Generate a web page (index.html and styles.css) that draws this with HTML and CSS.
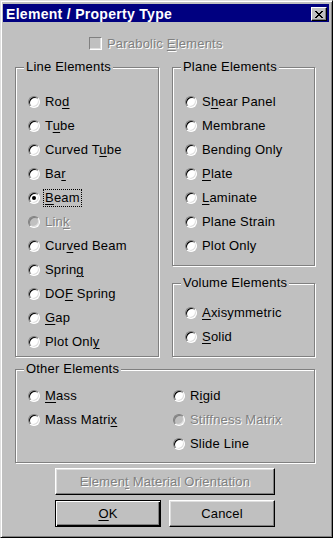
FILE: index.html
```html
<!DOCTYPE html>
<html>
<head>
    <title>Element / Property Type</title>
    <meta name="viewport" content="width=device-width, initial-scale=1.0">
    <link rel="stylesheet" href="styles.css">
</head>
<body>
    <div class="window">
        <div class="titlebar">
            <span class="title">Element / Property Type</span>
            <span class="close">
                <svg width="8" height="7" viewBox="0 0 8 7" shape-rendering="crispEdges">
                    <path fill="#000" d="M0 0h2v1h-2z M6 0h2v1h-2z M1 1h2v1h-2z M5 1h2v1h-2z M2 2h4v1h-4z M3 3h2v1h-2z M2 4h4v1h-4z M1 5h2v1h-2z M5 5h2v1h-2z M0 6h2v1h-2z M6 6h2v1h-2z"/>
                </svg>
            </span>
        </div>

        <div class="content">
            <div class="check-row disabled">
                <span class="checkbox"></span>
                <span class="label">Parabolic <u>E</u>lements</span>
            </div>

            <div class="upper">
                <div class="group line-group">
                    <div class="group-title">Line Elements</div>
                    <div class="radio-list">
                        <div class="radio-row"><span class="radio"></span><span class="label">Ro<u>d</u></span></div>
                        <div class="radio-row"><span class="radio"></span><span class="label">T<u>u</u>be</span></div>
                        <div class="radio-row"><span class="radio"></span><span class="label">Curved T<u>u</u>be</span></div>
                        <div class="radio-row"><span class="radio"></span><span class="label">Ba<u>r</u></span></div>
                        <div class="radio-row"><span class="radio checked"></span><span class="label focus"><u>B</u>eam</span></div>
                        <div class="radio-row disabled"><span class="radio"></span><span class="label">Lin<u>k</u></span></div>
                        <div class="radio-row"><span class="radio"></span><span class="label">Cur<u>v</u>ed Beam</span></div>
                        <div class="radio-row"><span class="radio"></span><span class="label">Sprin<u>g</u></span></div>
                        <div class="radio-row"><span class="radio"></span><span class="label">DO<u>F</u> Spring</span></div>
                        <div class="radio-row"><span class="radio"></span><span class="label"><u>G</u>ap</span></div>
                        <div class="radio-row"><span class="radio"></span><span class="label">Plot Onl<u>y</u></span></div>
                    </div>
                </div>

                <div class="right-col">
                    <div class="group plane-group">
                        <div class="group-title">Plane Elements</div>
                        <div class="radio-list">
                            <div class="radio-row"><span class="radio"></span><span class="label">S<u>h</u>ear Panel</span></div>
                            <div class="radio-row"><span class="radio"></span><span class="label">Membrane</span></div>
                            <div class="radio-row"><span class="radio"></span><span class="label">Bending Only</span></div>
                            <div class="radio-row"><span class="radio"></span><span class="label"><u>P</u>late</span></div>
                            <div class="radio-row"><span class="radio"></span><span class="label"><u>L</u>aminate</span></div>
                            <div class="radio-row"><span class="radio"></span><span class="label">Plane Strain</span></div>
                            <div class="radio-row"><span class="radio"></span><span class="label">Plot Only</span></div>
                        </div>
                    </div>

                    <div class="group volume-group">
                        <div class="group-title">Volume Elements</div>
                        <div class="radio-list">
                            <div class="radio-row"><span class="radio"></span><span class="label"><u>A</u>xisymmetric</span></div>
                            <div class="radio-row"><span class="radio"></span><span class="label"><u>S</u>olid</span></div>
                        </div>
                    </div>
                </div>
            </div>

            <div class="group other-group">
                <div class="group-title">Other Elements</div>
                <div class="other-cols">
                    <div class="radio-list">
                        <div class="radio-row"><span class="radio"></span><span class="label"><u>M</u>ass</span></div>
                        <div class="radio-row"><span class="radio"></span><span class="label">Mass Matri<u>x</u></span></div>
                    </div>
                    <div class="radio-list">
                        <div class="radio-row"><span class="radio"></span><span class="label">R<u>i</u>gid</span></div>
                        <div class="radio-row disabled"><span class="radio"></span><span class="label">Stiffness Matrix</span></div>
                        <div class="radio-row"><span class="radio"></span><span class="label">Slide Line</span></div>
                    </div>
                </div>
            </div>

            <div class="buttons">
                <div class="btn wide disabled">Elemen<u>t</u> Material Orientation</div>
                <div class="btn default"><u>O</u>K</div>
                <div class="btn">Cancel</div>
            </div>
        </div>
    </div>
</body>
</html>
```

FILE: styles.css
```css
body {
    margin: 0;
    background-color: #ffffff;
    font-family: "Liberation Sans", Arial, sans-serif;
    font-size: 13px;
    letter-spacing: 0.2px;
    color: #000000;
}

u {
    text-decoration-thickness: 1px;
    text-underline-offset: 2px;
}

.window {
    box-sizing: border-box;
    width: 333px;
    height: 538px;
    padding: 3px 3px 2px 2px;
    background-color: #c0c0c0;
    border: 1px solid;
    border-color: #dfdfdf #000000 #000000 #dfdfdf;
    box-shadow: inset 1px 1px 0 #ffffff, inset -1px -1px 0 #808080;
}

/* title bar */
.titlebar {
    display: flex;
    align-items: flex-start;
    height: 18px;
    background-color: #000080;
}

.title {
    padding: 2px 0 0 3px;
    line-height: 16px;
    font-size: 14px;
    font-weight: bold;
    letter-spacing: 0.3px;
    color: #ffffff;
}

.close {
    display: flex;
    align-items: center;
    justify-content: center;
    box-sizing: border-box;
    width: 16px;
    height: 14px;
    margin: 3px 2px 0 auto;
    background-color: #c0c0c0;
    border: 1px solid;
    border-color: #ffffff #000000 #000000 #ffffff;
    box-shadow: inset -1px -1px 0 #808080;
}

.content {
    padding-left: 12px;
}

/* parabolic checkbox */
.check-row {
    display: flex;
    align-items: center;
    height: 16px;
    margin: 13px 0 0 74px;
}

.checkbox {
    box-sizing: border-box;
    width: 13px;
    height: 13px;
    margin-right: 5px;
    border: 1px solid;
    border-color: #808080 #ffffff #ffffff #808080;
    box-shadow: inset -1px -1px 0 #dfdfdf;
}

.disabled .label,
.btn.disabled {
    color: #808080;
    text-shadow: 1px 1px 0 #ffffff;
}

/* group boxes */
.group {
    box-sizing: border-box;
    border: 1px solid #808080;
    box-shadow: 1px 1px 0 #ffffff, inset 1px 1px 0 #ffffff;
}

.group-title {
    width: fit-content;
    margin: -8px 0 0 8px;
    padding: 0 2px;
    line-height: 14px;
    background-color: #c0c0c0;
}

.upper {
    display: grid;
    grid-template-columns: 144px 143px;
    column-gap: 13px;
    margin-top: 16px;
}

.line-group {
    height: 290px;
}

.right-col {
    display: flex;
    flex-direction: column;
}

.plane-group {
    height: 199px;
}

.volume-group {
    height: 74px;
    margin-top: 17px;
}

.other-group {
    width: 300px;
    height: 94px;
    margin-top: 12px;
}

.radio-list {
    padding-left: 12px;
}

.line-group .radio-list,
.plane-group .radio-list {
    margin-top: 16px;
}

.volume-group .radio-list {
    margin-top: 11px;
}

.other-cols {
    display: grid;
    grid-template-columns: 157px auto;
    margin-top: 8px;
}

.other-cols .radio-list + .radio-list {
    padding-left: 0;
}

/* radio buttons */
.radio-row {
    display: flex;
    align-items: center;
    height: 24px;
}

.radio {
    display: flex;
    align-items: center;
    justify-content: center;
    box-sizing: border-box;
    width: 12px;
    height: 12px;
    border-radius: 50%;
    background-color: #ffffff;
    border: 1px solid;
    border-color: #808080 #ffffff #ffffff #808080;
    box-shadow: inset 1px 1px 0 #000000, inset -1px -1px 0 #dfdfdf;
}

.radio.checked::after {
    content: "";
    width: 4px;
    height: 4px;
    border-radius: 50%;
    background-color: #000000;
}

.radio-row.disabled .radio {
    background-color: #c0c0c0;
    box-shadow: inset 1px 1px 0 #808080, inset -1px -1px 0 #dfdfdf;
}

.radio-row .label {
    margin-left: 3px;
    padding: 0 1px;
    line-height: 16px;
    border: 1px dotted transparent;
}

.radio-row .label.focus {
    border-color: #000000;
}

/* push buttons */
.buttons {
    display: grid;
    grid-template-columns: 106px 106px;
    column-gap: 8px;
    row-gap: 5px;
    width: 220px;
    margin: 5px 0 0 40px;
}

.btn {
    box-sizing: border-box;
    height: 27px;
    line-height: 25px;
    text-align: center;
    background-color: #c0c0c0;
    border: 1px solid;
    border-color: #ffffff #000000 #000000 #ffffff;
    box-shadow: inset -1px -1px 0 #808080, inset 1px 1px 0 #dfdfdf;
}

.btn.wide {
    grid-column: 1 / 3;
}

.btn.default {
    border-color: #000000;
    box-shadow: inset 1px 1px 0 #ffffff, inset -1px -1px 0 #000000, inset -2px -2px 0 #808080;
}
```
